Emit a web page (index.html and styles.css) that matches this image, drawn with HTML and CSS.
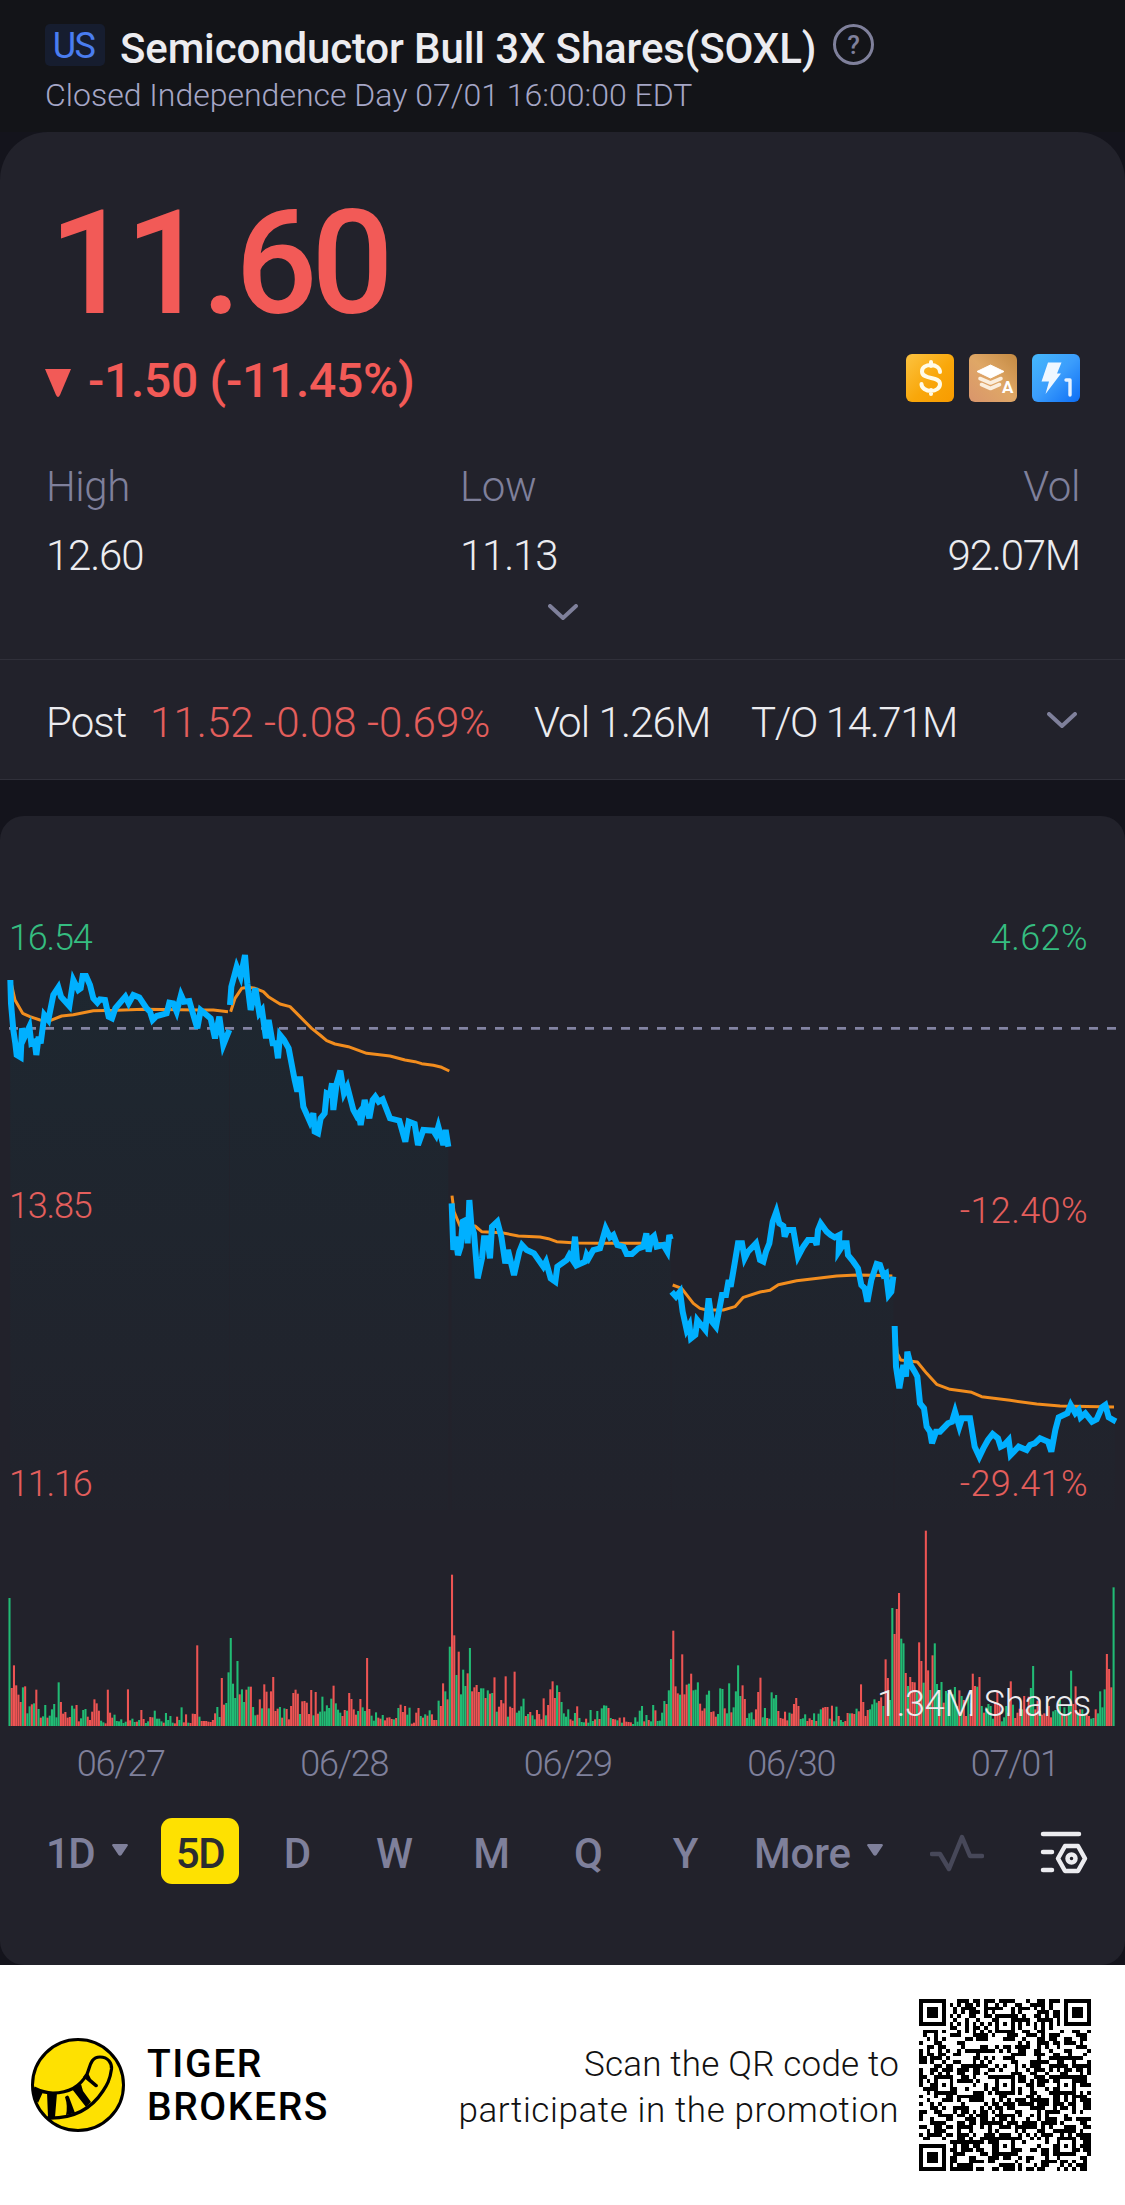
FILE: index.html
```html
<!DOCTYPE html>
<html lang="en">
<head>
    <meta charset="UTF-8">
    <meta name="viewport" content="width=device-width, initial-scale=1.0">
    <title>Semiconductor Bull 3X Shares(SOXL)</title>
    <link rel="stylesheet" href="styles.css">
</head>
<body>
    <header class="header">
        <div class="title-row">
            <span class="market">US</span>
            <h1 class="title">Semiconductor Bull 3X Shares(SOXL)</h1>
            <span class="help">?</span>
        </div>
        <div class="status">Closed Independence Day 07/01 16:00:00 EDT</div>
    </header>

    <section class="quote">
        <div class="price">11.60</div>
        <div class="change-row">
            <svg class="down" viewBox="0 0 26 28"><path d="M0 0h26L15 26q-2 4-4 0z" fill="#f25a57"/></svg>
            <span class="change">-1.50 (-11.45%)</span>
            <div class="tags">
                <svg viewBox="0 0 48 48">
                    <defs><linearGradient id="gold" x1="0" y1="0" x2="1" y2="1"><stop offset="0" stop-color="#fcc341"/><stop offset=".55" stop-color="#f9a70a"/><stop offset="1" stop-color="#f89b00"/></linearGradient></defs>
                    <rect width="48" height="48" rx="6" fill="url(#gold)"/>
                    <path d="M34 18c0-4-4-7-9-7s-9 2.500-9 6.500c0 9 18 4 18 12.500 0 4-4 7-9 7s-9.500-3-9.500-7M25 8v4M25 36v4" fill="none" stroke="#fffbe8" stroke-width="4" stroke-linecap="round"/>
                </svg>
                <svg viewBox="0 0 48 48">
                    <defs><linearGradient id="bronze" x1="0" y1="1" x2="1" y2="0"><stop offset="0" stop-color="#d9956c"/><stop offset=".5" stop-color="#dfa766"/><stop offset="1" stop-color="#c48a42"/></linearGradient></defs>
                    <rect width="48" height="48" rx="6" fill="url(#bronze)"/>
                    <path d="M8 17.500 21.500 11 35 17.500 21.500 24z" fill="#fff" stroke="#fff" stroke-linejoin="round"/>
                    <path d="M11 24.500 21.500 29 32 24.500M12.500 30.500 21.500 34.500 30.500 30.500" fill="none" stroke="#fbeedd" stroke-width="3.600" stroke-linecap="round" stroke-linejoin="round"/>
                    <text x="33" y="39" class="tag-a">A</text>
                </svg>
                <svg viewBox="0 0 48 48">
                    <defs><linearGradient id="azure" x1="0" y1="0" x2="1" y2="1"><stop offset="0" stop-color="#45b8fb"/><stop offset=".5" stop-color="#3b9dfc"/><stop offset="1" stop-color="#0c6df5"/></linearGradient></defs>
                    <rect width="48" height="48" rx="6" fill="url(#azure)"/>
                    <path d="M16 8.500h13.500L25 19.500h4L13.500 40l3.500-12.500H9.500z" fill="#eff7ff"/>
                    <path d="M34 26h4v15" fill="none" stroke="#e6f1ff" stroke-width="3.400" stroke-linecap="round" stroke-linejoin="round"/>
                </svg>
            </div>
        </div>

        <div class="stats">
            <div><div class="label">High</div><div class="value">12.60</div></div>
            <div><div class="label">Low</div><div class="value">11.13</div></div>
            <div><div class="label">Vol</div><div class="value">92.07M</div></div>
        </div>
        <svg class="chevron expand" viewBox="0 0 30 16"><path d="M2 2l13 12L28 2"/></svg>

        <div class="post">
            <span class="post-name">Post</span>
            <span class="post-price">11.52 -0.08 -0.69%</span>
            <span class="post-vol">Vol 1.26M</span>
            <span class="post-to">T/O 14.71M</span>
            <svg class="chevron" viewBox="0 0 30 16"><path d="M2 2l13 12L28 2"/></svg>
        </div>
    </section>

    <section class="chart-card">
        <div class="plot">
            <svg class="chart" id="chart" viewBox="0 0 3375 2490">
                <defs>
                    <linearGradient id="fade" gradientUnits="userSpaceOnUse" x1="0" y1="300" x2="0" y2="1830">
                        <stop offset="0" stop-color="#1b2a33" stop-opacity=".6"/>
                        <stop offset="1" stop-color="#1b2a33" stop-opacity=".1"/>
                    </linearGradient>
                </defs>
                <g id="areas"></g>
                <path d="M27 385H3352" class="prev-close"/>
                <g id="averages"></g>
                <g id="prices"></g>
                <g id="bars"></g>
            </svg>
            <span class="axis up y1">16.54</span>
            <span class="axis y2">13.85</span>
            <span class="axis y3">11.16</span>
            <span class="axis up p1">4.62%</span>
            <span class="axis p2">-12.40%</span>
            <span class="axis p3">-29.41%</span>
            <span class="shares">1.34M Shares</span>
        </div>
        <div class="dates">
            <span>06/27</span><span>06/28</span><span>06/29</span><span>06/30</span><span>07/01</span>
        </div>
        <nav class="ranges">
            <span class="range first">1D <svg class="caret" viewBox="0 0 16 12"><path d="M1 0h14q1.500 1 .5 2L9.500 11q-1.500 1.500-3 0L.5 2Q-.5 1 1 0z"/></svg></span>
            <span class="range active">5D</span>
            <span class="range">D</span>
            <span class="range">W</span>
            <span class="range">M</span>
            <span class="range">Q</span>
            <span class="range">Y</span>
            <span class="range more">More <svg class="caret" viewBox="0 0 16 12"><path d="M1 0h14q1.500 1 .5 2L9.500 11q-1.500 1.500-3 0L.5 2Q-.5 1 1 0z"/></svg></span>
            <svg class="pulse" viewBox="0 0 54 38"><path d="M2 20h8l9 15L32 3l8 19h12"/></svg>
            <svg class="settings" viewBox="0 0 48 44">
                <path d="M3 4h36M3 22h9M3 40h9"/>
                <path d="M25 16h13l7 12.500L38 41H25l-7-12.500z"/>
                <circle cx="31.500" cy="28.500" r="4"/>
            </svg>
        </nav>
    </section>

    <footer class="footer">
        <svg class="logo" viewBox="0 0 94 96">
            <circle cx="47" cy="48" r="45.500" fill="#fee101" stroke="#000" stroke-width="3"/>
            <path d="M3 51C9 54 15 56 22 56C39 56 50 48 56 37C59 31 59 20 69 20C77 20 81 26 80.500 32C79 43 76 48 72 54C61 71 43 82 16 81" fill="none" stroke="#000" stroke-width="3.200"/>
            <path d="M2 50l10 5-5 11-4-6zM16 55l10 1-2 24h-7zM34 60q3-3 4 0l6 16-9 2q2-9-1-18zM41 52l9-5 2 7 8 11-5 5zM52 40l5-4 3 6 7 6q0 3-3 2z"/>
        </svg>
        <div class="brand">TIGER<br>BROKERS</div>
        <div class="promo"><span class="promo-top">Scan the QR code to</span><br>participate in the promotion</div>
        <svg class="qr" id="qr" viewBox="0 0 45 45" shape-rendering="crispEdges"></svg>
    </footer>

    <script src="chart.js"></script>
</body>
</html>
```
FILE: styles.css
```css
body {
    margin: 0;
    width: 1125px;
    background: #14141c;
    color: #ececf0;
    font-family: Roboto, "Liberation Sans", sans-serif;
    font-weight: 300;
}
svg {
    display: block;
    flex: none;
}
.header {
    box-sizing: border-box;
    height: 132px;
    padding: 24px 45px 0;
    background: #131418;
}
.title-row {
    display: flex;
    height: 42px;
}
.market {
    box-sizing: border-box;
    width: 60px;
    padding-right: 3px;
    border-radius: 5px;
    background: #161d2f;
    color: #4a7df0;
    font-size: 36px;
    font-weight: 400;
    line-height: 45px;
    letter-spacing: -1.5px;
    text-align: center;
}
.title {
    margin: 0 0 0 15px;
    font-size: 42px;
    font-weight: 500;
    line-height: 49px;
    letter-spacing: -0.13px;
    white-space: nowrap;
    width: 698px;
}
.help {
    box-sizing: border-box;
    width: 41px;
    height: 41px;
    margin-left: 15px;
    border: 3px solid #7f809b;
    border-radius: 50%;
    color: #7f809b;
    font-size: 26px;
    font-weight: 500;
    line-height: 36px;
    text-align: center;
}
.status {
    margin-top: 9px;
    color: #a5a6c6;
    font-size: 32px;
    line-height: 41px;
    letter-spacing: 0;
    white-space: nowrap;
}
.quote {
    height: 647px;
    border-bottom: 1px solid #30303a;
    border-radius: 48px 48px 0 0;
    background: #22222b;
}
.price {
    padding: 66px 0 0 49px;
    color: #f25a57;
    font-size: 145px;
    font-weight: 500;
    line-height: 130px;
    letter-spacing: -6.3px;
}
.change-row {
    display: flex;
    align-items: center;
    height: 48px;
    margin-top: 26px;
    padding: 0 45px;
}
.down {
    width: 26px;
    height: 28px;
    margin-top: 9px;
}
.change {
    margin-left: 17px;
    padding-top: 4px;
    color: #f25a57;
    font-size: 48px;
    font-weight: 500;
    letter-spacing: -0.3px;
}
.tags {
    display: flex;
    gap: 15px;
    margin-left: auto;
}
.tags svg {
    width: 48px;
    height: 48px;
}
.tag-a {
    fill: #fff;
    font-size: 17px;
    font-weight: 700;
}
.stats {
    display: grid;
    grid-template-columns: 414px 1fr 1fr;
    margin-top: 60px;
    padding: 0 45px 0 46px;
    font-size: 42px;
    line-height: 50px;
}
.stats > div:last-child {
    text-align: right;
}
.stats .label {
    color: #7f809b;
    letter-spacing: -0.4px;
}
.stats .value {
    margin-top: 19px;
    letter-spacing: -1.2px;
}
.chevron {
    width: 30px;
    height: 16px;
}
.chevron path {
    fill: none;
    stroke: #7f809b;
    stroke-width: 4;
    stroke-linecap: round;
}
.expand {
    margin: 23px auto 0;
}
.post {
    display: flex;
    align-items: center;
    box-sizing: border-box;
    height: 120px;
    margin-top: 39px;
    padding: 6px 48px 0 46px;
    border-top: 1px solid #30303a;
    font-size: 42px;
    letter-spacing: -0.9px;
    white-space: nowrap;
}
.post-name {
    width: 104px;
}
.post-price {
    width: 384px;
    color: #e35e5c;
    letter-spacing: 0.1px;
}
.post-vol {
    width: 217px;
}
.post-to {
    letter-spacing: -1.4px;
}
.post .chevron {
    margin-left: auto;
    margin-top: -6px;
}
.chart-card {
    box-sizing: border-box;
    height: 1149px;
    margin-top: 36px;
    padding-top: 84px;
    border-radius: 24px;
    background: #22222b;
}
.plot {
    position: relative;
}
.chart {
    width: 1125px;
    height: 830px;
}
.prev-close {
    stroke: #8384a3;
    stroke-width: 8;
    stroke-dasharray: 27 27;
}
.area {
    fill: url(#fade);
}
.average {
    fill: none;
    stroke: #f28d1e;
    stroke-width: 9;
    stroke-linejoin: round;
}
.line {
    fill: none;
    stroke: #00b0ff;
    stroke-width: 18;
}
.bar-up {
    stroke: #21bb74;
}
.bar-down {
    stroke: #ed5453;
}
.axis {
    position: absolute;
    color: #e35e5c;
    font-size: 36px;
    line-height: 40px;
    letter-spacing: 0.4px;
}
.up {
    color: #35bd80;
}
.y1, .y2, .y3 {
    left: 9px;
    letter-spacing: -1.2px;
}
.p1, .p2, .p3 {
    right: 37px;
}
.y1, .p1 { top: 18px; }
.y2 { top: 286px; }
.p2 { top: 291px; }
.y3, .p3 { top: 564px; }
.shares {
    position: absolute;
    right: 34px;
    top: 784px;
    font-size: 36px;
    line-height: 40px;
    letter-spacing: -0.3px;
}
.dates {
    display: grid;
    grid-template-columns: repeat(5, 223.5px);
    margin: 12px 0 0 9px;
    color: #7f809b;
    font-size: 36px;
    line-height: 44px;
    letter-spacing: -1.2px;
    text-align: center;
}
.ranges {
    display: flex;
    align-items: center;
    height: 66px;
    margin-top: 32px;
    padding-left: 46px;
    color: #7f809b;
    font-size: 42px;
    font-weight: 500;
    line-height: 66px;
}
.range {
    display: flex;
    align-items: center;
    justify-content: center;
    box-sizing: border-box;
    width: 97px;
    height: 66px;
    padding-top: 5px;
}
.first {
    justify-content: flex-start;
    width: 115px;
    letter-spacing: -1.5px;
}
.active {
    width: 78px;
    margin-right: 10px;
    border-radius: 11px;
    background: #fee101;
    color: #2b2c30;
    letter-spacing: -1.5px;
}
.caret {
    width: 16px;
    height: 12px;
    margin-left: 18px;
    margin-top: -8px;
    fill: #7f809b;
}
.more {
    justify-content: flex-start;
    width: 150px;
    margin-left: 20px;
    margin-right: 26px;
    letter-spacing: -0.2px;
}
.more .caret {
    margin-left: 16px;
}
.pulse {
    width: 54px;
    height: 38px;
    margin-top: 3px;
}
.pulse path {
    fill: none;
    stroke: #474859;
    stroke-width: 4.500;
    stroke-linecap: round;
    stroke-linejoin: round;
}
.settings {
    width: 48px;
    height: 44px;
    margin-left: 56px;
    margin-top: 2px;
    fill: none;
    stroke: #ececf0;
    stroke-width: 4.500;
    stroke-linecap: round;
    stroke-linejoin: round;
}
.footer {
    display: flex;
    align-items: center;
    height: 240px;
    background: #fff;
    color: #000;
}
.logo {
    width: 94px;
    height: 96px;
    margin-left: 31px;
}
.brand {
    margin-left: 22px;
    padding-top: 1px;
    font-size: 39px;
    font-weight: 500;
    line-height: 43px;
    letter-spacing: 1.6px;
}
.promo {
    margin-left: auto;
    padding-top: 5px;
    color: #111;
    font-size: 35px;
    line-height: 46px;
    letter-spacing: 0.6px;
    text-align: right;
    white-space: nowrap;
}
.promo-top {
    letter-spacing: 0.2px;
}
.qr {
    width: 172px;
    height: 172px;
    margin: 0 34px 0 20px;
}
```
FILE: chart.js
```js
// one entry per trading day: offset of the points, price line, average line
const days = [
    {
        x: 0, y: 0,
        price: '31,240 33,310 40,390 46,430 50,465 62,472 66,385 74,410 88,380 94,430 104,425 109,465 116,410 122,430 133,345 145,360 160,285 175,262 183,290 208,318 220,240 235,270 242,265 248,228 258,228 270,255 280,295 292,308 300,298 315,300 326,350 336,355 346,325 376,290 386,310 400,285 418,292 440,325 450,335 458,360 470,348 500,340 508,308 520,310 530,335 543,285 552,305 568,303 580,345 592,385 602,330 632,355 645,415 658,350 670,435 688,390',
        avg: '35,255 45,300 68,340 90,350 120,360 150,362 185,348 220,344 280,332 350,331 430,328 600,330 640,330 684,335'
    },
    {
        x: 0, y: 0,
        price: '690,315 694,260 710,200 722,230 735,165 742,250 752,330 766,265 778,340 786,330 798,415 806,360 818,430 828,430 834,475 840,405 852,420 866,445 884,540 892,575 900,530 910,620 930,665 940,640 944,695 954,700 962,655 974,640 980,580 990,585 996,550 1000,630 1010,550 1021,512 1032,580 1042,560 1060,630 1070,648 1076,640 1082,675 1094,600 1108,655 1118,600 1126,590 1136,605 1148,598 1170,655 1198,662 1216,725 1226,665 1244,672 1254,735 1270,690 1300,692 1308,705 1315,680 1330,735 1337,690 1345,740',
        avg: '692,335 705,295 725,265 745,262 765,265 790,275 805,290 840,312 870,320 900,350 935,385 960,405 980,422 1005,432 1045,440 1100,460 1170,468 1215,480 1245,485 1265,491 1300,496 1325,502 1348,513'
    },
    {
        x: 1290, y: 750,
        price: '65,160 70,300 76,260 84,315 92,290 98,215 108,210 113,280 118,150 124,225 132,250 143,385 156,325 162,265 172,265 180,325 186,230 202,215 214,260 226,340 234,300 252,375 268,305 276,285 290,300 312,310 340,350 348,335 362,385 376,395 382,350 410,330 418,315 428,330 435,260 442,345 465,335 470,315 476,325 490,300 510,295 527,235 540,262 550,255 562,285 580,290 590,312 606,312 625,295 640,290 649,250 656,305 664,265 672,258 680,290 700,285 712,305 718,255 722,268',
        avg: '66,137 72,185 90,228 135,228 155,245 215,248 265,258 330,261 355,266 380,275 440,279 520,280 640,280 722,282'
    },
    {
        x: 1980, y: 840,
        price: '35,335 48,350 60,335 68,395 80,450 88,435 93,475 106,465 112,420 136,450 146,355 156,425 168,440 186,345 198,345 206,300 212,320 224,250 234,190 246,190 254,235 264,215 288,190 300,240 310,245 318,215 328,190 338,125 349,95 358,130 370,138 374,170 382,150 400,150 414,230 430,200 444,180 464,180 470,195 474,150 482,130 500,155 512,165 524,172 538,165 536,215 552,190 560,190 564,225 580,245 594,265 604,315 614,325 622,365 634,300 650,252 660,255 670,285 678,280 686,345 694,335 700,290',
        avg: '38,315 65,325 100,370 120,385 140,390 190,390 225,380 250,352 300,336 330,331 355,314 410,302 480,294 530,288 590,285 640,286 697,288'
    },
    {
        x: 1980, y: 840,
        price: '704,438 708,560 718,625 730,555 738,590 742,515 752,555 764,575 772,590 780,670 792,685 800,740 810,755 816,790 828,755 840,755 864,730 876,725 885,695 898,740 906,715 930,715 944,800 958,830 970,805 984,780 998,762 1014,775 1022,800 1032,795 1046,780 1052,825 1076,800 1100,810 1110,795 1124,790 1140,775 1164,785 1174,815 1186,750 1196,712 1222,700 1232,675 1246,700 1256,690 1262,712 1276,700 1296,725 1310,718 1326,682 1336,675 1346,712 1360,720 1364,712',
        avg: '704,440 712,520 722,540 772,546 800,580 830,613 870,628 935,637 965,650 1050,661 1130,672 1200,678 1362,681'
    }
];

// volume bars, negative = down bar
const volumes = [
    384,-114,-182,-122,-94,-72,116,-119,38,59,-65,68,-109,51,-25,29,63,-25,31,50,66,26,131,-72,-37,-42,-25,-27,61,52,
    -63,-14,23,48,51,-28,-18,-43,-80,-68,-46,16,11,-8,-109,-40,-25,34,15,14,20,9,13,-110,-17,22,12,-13,18,-48,
    -21,9,14,-27,-26,46,22,22,14,-10,39,18,30,10,-8,-28,18,56,-11,-35,10,-9,-37,-36,-242,28,-15,-15,-15,-13,
    -12,-18,-38,57,27,-144,-64,69,161,264,127,84,195,-95,110,72,-109,118,-118,57,32,-34,-80,53,-125,-103,53,-104,-147,-45,
    -52,57,-25,53,-51,-20,-60,-99,-109,-97,36,-74,-75,-70,-36,-108,32,-102,-37,43,88,44,62,54,82,-121,68,49,40,-30,
    -48,46,-99,-81,-50,-34,45,-81,56,45,-204,-51,31,16,41,-25,-22,33,-17,-25,-26,-21,20,-24,54,-64,-42,-60,34,55,
    -7,-10,-40,-54,30,-25,35,-31,47,-35,-18,-18,76,-60,-128,104,-80,238,-454,-272,153,-223,95,169,120,-158,234,-104,-116,-123,
    -102,113,113,-84,107,-97,99,-146,43,-58,-78,-68,-149,28,-58,-54,-163,40,46,59,82,-30,36,-42,32,20,-48,-36,-20,-83,
    32,-63,-110,-134,-84,122,-102,72,38,28,50,-20,-16,39,-59,24,12,11,-22,10,48,15,-20,45,-21,53,62,61,-54,24,
    -21,-20,17,-25,10,-26,-13,-12,-11,6,26,13,46,60,-14,33,-18,14,63,-47,15,16,40,75,-66,107,201,-286,-119,-98,
    94,-215,-95,-124,127,-157,107,109,131,-67,-46,-53,94,106,-42,-44,-28,36,113,111,-53,38,128,-41,56,104,182,90,-122,-81,
    24,38,41,20,-50,-102,-145,26,54,-24,22,101,83,93,-45,-24,-22,-43,-17,40,-37,-66,-84,-60,21,23,35,-15,-23,-18,
    38,-15,37,50,-55,-57,-57,22,-61,14,58,-30,18,12,-15,-39,38,-38,-36,52,-44,-125,-72,-30,-48,50,65,80,70,-75,
    -86,60,-200,-144,78,354,-276,-351,-399,262,248,-159,120,-147,-132,-131,100,-251,-195,130,-586,-167,108,-212,248,126,-86,132,-70,105,
    98,110,95,117,60,-107,90,-78,-30,90,-36,-157,-120,118,-147,60,-40,56,66,60,22,-70,-102,-66,14,26,60,-40,-134,64,
    -24,-40,-52,50,-90,-50,-88,114,180,-50,-76,46,-34,-38,-30,-60,-26,44,48,46,78,-36,56,-30,60,166,-66,-119,40,-50,
    50,34,-34,-30,22,24,-50,38,104,56,110,-216,-171,-116,416
];

const ns = 'http://www.w3.org/2000/svg';

function add(parent, tag, attrs) {
    const el = document.createElementNS(ns, tag);
    Object.keys(attrs).forEach(key => el.setAttribute(key, attrs[key]));
    document.getElementById(parent).appendChild(el);
}

days.forEach(day => {
    const points = day.price.split(' ').map(p => {
        const [x, y] = p.split(',').map(Number);
        return [x + day.x, y + day.y];
    });
    const first = points[0][0];
    const last = points[points.length - 1][0];
    add('areas', 'path', { class: 'area', d: 'M' + points.join('L') + 'L' + last + ',1830L' + first + ',1830Z' });
    add('prices', 'polyline', { class: 'line', points: points.join(' ') });
    add('averages', 'polyline', { class: 'average', points: day.avg, transform: `translate(${day.x} ${day.y})` });
});

volumes.forEach((v, i) => {
    const x = 28.5 + i * 6.705;
    add('bars', 'path', { class: v > 0 ? 'bar-up' : 'bar-down', 'stroke-width': 6.2, d: `M${x} 2478V${2478 - Math.abs(v)}` });
});

// QR code, 45 x 45 modules
const size = 45;
let seed = 20220704;

function random() {
    seed = (seed * 1103515245 + 12345) % 2147483648;
    return seed / 2147483648;
}

function ring(x, y, cx, cy) {
    return Math.max(Math.abs(x - cx), Math.abs(y - cy));
}

function isDark(x, y) {
    const noise = random() < 0.5;
    for (const [cx, cy] of [[3, 3], [size - 4, 3], [3, size - 4]]) {
        const r = ring(x, y, cx, cy);
        if (r <= 4) return r < 2 || r === 3;
    }
    for (const [cx, cy] of [[22, 6], [6, 22], [22, 22], [38, 22], [22, 38], [38, 38]]) {
        const r = ring(x, y, cx, cy);
        if (r <= 2) return r !== 1;
    }
    if (x === 6 || y === 6) return (x + y) % 2 === 0;
    return noise;
}

let modules = '';
for (let y = 0; y < size; y++) {
    for (let x = 0; x < size; x++) {
        if (isDark(x, y)) modules += `M${x} ${y}h1v1h-1z`;
    }
}
add('qr', 'path', { d: modules });
```
